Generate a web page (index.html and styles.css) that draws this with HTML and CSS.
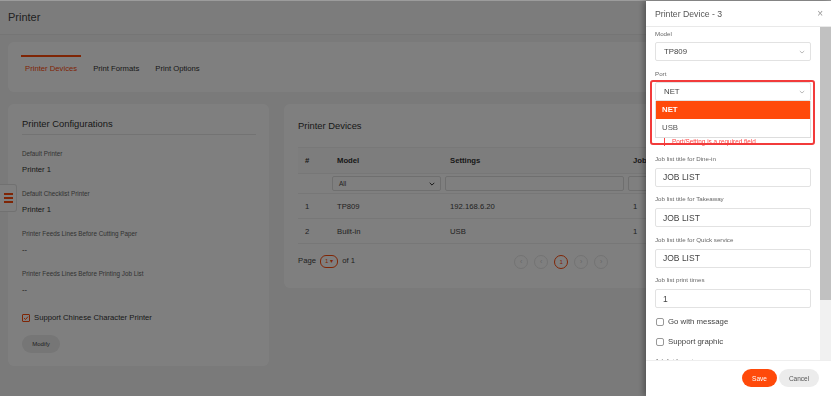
FILE: index.html
```html
<!DOCTYPE html>
<html lang="en">
<head>
  <meta charset="UTF-8">
  <meta name="viewport" content="width=device-width, initial-scale=1.0">
  <title>Printer</title>
  <link rel="stylesheet" href="styles.css">
</head>
<body>
  <!-- Page behind the drawer -->
  <div class="page">
    <header class="topbar">Printer</header>

    <nav class="card tabs">
      <a class="tab active">Printer Devices</a>
      <a class="tab">Print Formats</a>
      <a class="tab">Print Options</a>
    </nav>

    <div class="content">
      <!-- Printer configurations -->
      <section class="card config">
        <h2 class="card-title">Printer Configurations</h2>
        <div class="field">
          <div class="field-label">Default Printer</div>
          <div class="field-value">Printer 1</div>
        </div>
        <div class="field">
          <div class="field-label">Default Checklist Printer</div>
          <div class="field-value">Printer 1</div>
        </div>
        <div class="field">
          <div class="field-label">Printer Feeds Lines Before Cutting Paper</div>
          <div class="field-value">--</div>
        </div>
        <div class="field">
          <div class="field-label">Printer Feeds Lines Before Printing Job List</div>
          <div class="field-value">--</div>
        </div>
        <label class="check">
          <span class="box checked">
            <svg width="6" height="6" viewBox="0 0 6 6"><path d="M1 3.1 2.5 4.5 5 1.6" fill="none" stroke="#ff4a0a" stroke-width="1"/></svg>
          </span>
          Support Chinese Character Printer
        </label>
        <button class="btn-modify">Modify</button>
      </section>

      <!-- Printer devices table -->
      <section class="card devices">
        <h2 class="card-title plain">Printer Devices</h2>
        <div class="table">
          <div class="row head">
            <div>#</div><div>Model</div><div>Settings</div><div>Job</div>
          </div>
          <div class="row filters">
            <div></div>
            <div>
              <div class="filter select">All
                <svg width="6" height="4" viewBox="0 0 6 4"><path d="M.7.8 3 3.1 5.3.8" fill="none" stroke="#333" stroke-width="1"/></svg>
              </div>
            </div>
            <div><div class="filter"></div></div>
            <div><div class="filter"></div></div>
          </div>
          <div class="row item">
            <div>1</div><div>TP809</div><div>192.168.6.20</div><div>1</div>
          </div>
          <div class="row item">
            <div>2</div><div>Built-in</div><div>USB</div><div>1</div>
          </div>
        </div>
        <div class="table-footer">
          <div class="page-of">Page <span class="page-pill">1 &#9662;</span> of 1</div>
          <div class="pager">
            <span class="pg">&lsaquo;</span>
            <span class="pg">&lsaquo;</span>
            <span class="pg current">1</span>
            <span class="pg">&rsaquo;</span>
            <span class="pg">&rsaquo;</span>
          </div>
        </div>
      </section>
    </div>
  </div>

  <!-- Side menu toggle -->
  <div class="side-toggle"><span></span><span></span><span></span></div>

  <div class="overlay"></div>

  <!-- Drawer: edit printer device -->
  <aside class="drawer">
    <div class="drawer-head">
      <span>Printer Device - 3</span>
      <span class="close">&times;</span>
    </div>

    <div class="drawer-body">
      <div class="drawer-scroll">
        <div class="form-group first">
          <div class="form-label">Model</div>
          <div class="control sel">TP809
            <svg width="6" height="4" viewBox="0 0 6 4"><path d="M.8 1 3 3 5.2 1" fill="none" stroke="#aaa" stroke-width=".8"/></svg>
          </div>
        </div>

        <div class="form-group port">
          <div class="form-label">Port</div>
          <div class="control sel">NET
            <svg width="6" height="4" viewBox="0 0 6 4"><path d="M.8 1 3 3 5.2 1" fill="none" stroke="#aaa" stroke-width=".8"/></svg>
          </div>
          <div class="options">
            <div class="option active">NET</div>
            <div class="option">USB</div>
          </div>
          <div class="error">Port/Setting is a required field</div>
          <div class="highlight"></div>
        </div>

        <div class="form-group">
          <div class="form-label">Job list title for Dine-in</div>
          <div class="control input">JOB LIST</div>
        </div>
        <div class="form-group">
          <div class="form-label">Job list title for Takeaway</div>
          <div class="control input">JOB LIST</div>
        </div>
        <div class="form-group">
          <div class="form-label">Job list title for Quick service</div>
          <div class="control input">JOB LIST</div>
        </div>
        <div class="form-group">
          <div class="form-label">Job list print times</div>
          <div class="control input">1</div>
        </div>

        <label class="check-row first"><span class="cbox"></span>Go with message</label>
        <label class="check-row"><span class="cbox"></span>Support graphic</label>

        <div class="form-group">
          <div class="form-label">Job list format</div>
        </div>
      </div>
      <div class="scrollbar"><div class="thumb"></div></div>
    </div>

    <div class="drawer-foot">
      <button class="btn save">Save</button>
      <button class="btn cancel">Cancel</button>
    </div>
  </aside>
</body>
</html>
```

FILE: styles.css
```css
/* base */
html {
    border-top: 1px solid #9c9c9c;
}

body {
    margin: 0;
    height: 395px;
    overflow: hidden;
    background-color: #f4f4f4;
    font-family: "Liberation Sans", Arial, sans-serif;
    color: #333;
}

.page {
    padding: 0 8px;
}

/* top bar */
.topbar {
    margin: 0 -8px;
    padding-left: 8px;
    height: 33px;
    line-height: 33px;
    font-size: 11px;
    color: #444;
    background-color: #f8f8f8;
    border-bottom: 1px solid #ebebeb;
}

.card {
    background-color: #fff;
    border-radius: 6px;
}

/* tabs */
.tabs {
    margin-top: 7px;
    height: 50px;
    box-sizing: border-box;
    padding: 13px 0 0 13px;
    display: flex;
    gap: 8px;
}

.tab {
    border-top: 2px solid transparent;
    padding: 7px 4px 0;
    line-height: 10px;
    font-size: 7.7px;
    color: #333;
}

.tab.active {
    border-top-color: #ff4a0a;
    color: #ff4a0a;
}

.content {
    display: flex;
    align-items: flex-start;
    gap: 15px;
    margin-top: 12px;
}

/* configuration card */
.config {
    width: 261px;
    box-sizing: border-box;
    padding: 0 13px 13px 14px;
}

.card-title {
    margin: 0;
    padding: 14px 0 4px;
    line-height: 12px;
    font-size: 9.4px;
    font-weight: normal;
    color: #333;
    border-bottom: 1px solid #e6e6e6;
}

.card-title.plain {
    border: none;
    padding: 16px 0 0;
}

.field {
    margin-top: 15px;
}

.field-label {
    font-size: 6.3px;
    line-height: 8px;
    color: #666;
}

.field-value {
    margin-top: 7px;
    font-size: 7.7px;
    line-height: 10px;
    color: #333;
}

.check {
    display: flex;
    align-items: center;
    gap: 4px;
    margin-top: 17px;
    font-size: 7.7px;
    line-height: 12px;
    color: #333;
}

.box {
    width: 8px;
    height: 8px;
    box-sizing: border-box;
    border: 1px solid #ff4a0a;
    border-radius: 1px;
    display: flex;
    align-items: center;
    justify-content: center;
}

.btn-modify {
    display: block;
    margin-top: 11px;
    width: 38px;
    height: 18px;
    padding: 0;
    border: none;
    border-radius: 9px;
    background-color: #ececec;
    font: 6px "Liberation Sans", Arial, sans-serif;
    color: #444;
}

/* devices card */
.devices {
    flex: 1;
    height: 184px;
    box-sizing: border-box;
    padding-left: 14px;
}

.table {
    margin-top: 15px;
    font-size: 7.7px;
}

.row {
    display: grid;
    grid-template-columns: 32px 113px 183px 1fr;
    align-items: center;
    border-bottom: 1px solid #efefef;
    box-sizing: border-box;
}

.row > div {
    padding-left: 7px;
}

.row.head {
    height: 27px;
    background-color: #fafafa;
    border-top: 1px solid #f0f0f0;
    font-weight: bold;
    color: #333;
}

.row.filters {
    height: 20px;
}

.row.filters > div {
    padding: 0 2px;
}

.filter {
    height: 15px;
    box-sizing: border-box;
    border: 1px solid #dedede;
    border-radius: 2px;
}

.filter.select {
    display: flex;
    align-items: center;
    justify-content: space-between;
    padding: 0 5px 0 6px;
    font-size: 6.5px;
    color: #444;
}

.row.item {
    height: 25px;
    color: #444;
}

.table-footer {
    display: flex;
    align-items: center;
    height: 35px;
    font-size: 7.7px;
    color: #444;
}

.page-pill {
    display: inline-block;
    margin: 0 2px;
    padding: 0 4px;
    height: 11px;
    line-height: 11px;
    border: 1px solid #ff4a0a;
    border-radius: 6px;
    font-size: 6px;
    color: #ff4a0a;
}

.pager {
    display: flex;
    gap: 6px;
    margin-left: 159px;
}

.pg {
    width: 14px;
    height: 14px;
    box-sizing: border-box;
    border: 1px solid #e6e6e6;
    border-radius: 50%;
    display: flex;
    align-items: center;
    justify-content: center;
    font-size: 7px;
    color: #ccc;
}

.pg.current {
    border-color: #ff4a0a;
    color: #ff4a0a;
    font-size: 6px;
}

/* side menu toggle */
.side-toggle {
    position: absolute;
    left: 0;
    top: 184px;
    width: 17px;
    height: 28px;
    box-sizing: border-box;
    background-color: #fff;
    border: 1px solid #e3e3e3;
    border-left: none;
    border-radius: 0 3px 3px 0;
    display: flex;
    flex-direction: column;
    align-items: center;
    justify-content: center;
    gap: 2.5px;
}

.side-toggle span {
    width: 9px;
    height: 1.5px;
    background-color: #ff4a0a;
}

.overlay {
    position: fixed;
    top: 1px;
    left: 0;
    right: 0;
    bottom: 0;
    background-color: rgba(0, 0, 0, 0.5);
}

/* drawer */
.drawer {
    position: fixed;
    top: 1px;
    right: 0;
    bottom: 0;
    width: 185px;
    background-color: #fff;
    display: flex;
    flex-direction: column;
    box-shadow: -2px 0 6px rgba(0, 0, 0, 0.35);
}

.drawer-head {
    height: 26px;
    box-sizing: border-box;
    border-bottom: 1px solid #e9e9e9;
    padding: 0 9px;
    display: flex;
    align-items: center;
    justify-content: space-between;
    font-size: 8.7px;
    color: #555;
}

.close {
    font-size: 10px;
    color: #999;
    margin-right: -1px;
}

.drawer-body {
    flex: 1;
    min-height: 0;
    display: flex;
}

.drawer-scroll {
    flex: 1;
    overflow: hidden;
    padding: 3px 9px 0;
}

.scrollbar {
    width: 11px;
    background-color: #f1f1f1;
}

.thumb {
    height: 273px;
    background-color: #c1c1c1;
}

.form-group {
    margin-top: 8.5px;
}

.form-group.first {
    margin-top: 0;
}

.form-group.port {
    margin-top: 9px;
}

.form-label {
    font-size: 6.2px;
    line-height: 8px;
    color: #666;
}

.control {
    height: 19px;
    box-sizing: border-box;
    border: 1px solid #e2e2e2;
    border-radius: 2px;
    display: flex;
    align-items: center;
    justify-content: space-between;
    color: #444;
}

.control.sel {
    margin-top: 4px;
    padding: 0 5px 0 8px;
    font-size: 7.8px;
}

.control.input {
    margin-top: 5px;
    padding: 0 7px;
    font-size: 8.5px;
}

/* port with open dropdown */
.port {
    position: relative;
}

.options {
    border: 1px solid #ddd;
    border-top: none;
}

.option {
    height: 18px;
    line-height: 18px;
    padding-left: 6px;
    font-size: 7.8px;
    color: #555;
}

.option.active {
    background-color: #ff4a0a;
    color: #fff;
    font-weight: bold;
}

.error {
    margin: 0 0 1px 9px;
    padding-left: 7px;
    border-left: 1px solid #f44;
    font-size: 6.4px;
    line-height: 8px;
    color: #f44;
}

.highlight {
    position: absolute;
    top: 10px;
    left: -5px;
    right: -4px;
    height: 65px;
    box-sizing: border-box;
    border: 2px solid #f23b3b;
    border-radius: 3px;
}

.check-row {
    display: flex;
    align-items: center;
    gap: 4px;
    margin-top: 8px;
    font-size: 7.8px;
    line-height: 12px;
    color: #444;
}

.check-row.first {
    margin-top: 8px;
}

.cbox {
    width: 8px;
    height: 8px;
    margin-left: 1px;
    box-sizing: border-box;
    border: 1px solid #999;
    border-radius: 2px;
}

.drawer-foot {
    height: 36px;
    box-sizing: border-box;
    border-top: 1px solid #eee;
    display: flex;
    justify-content: flex-end;
    align-items: flex-start;
    gap: 2px;
    padding: 8px 12px 0 0;
}

.btn {
    height: 18px;
    padding: 0;
    border: none;
    border-radius: 9px;
    font: 6.5px "Liberation Sans", Arial, sans-serif;
}

.btn.save {
    width: 35px;
    background-color: #ff4a0a;
    color: #fff;
}

.btn.cancel {
    width: 40px;
    background-color: #ececec;
    color: #555;
}
```
